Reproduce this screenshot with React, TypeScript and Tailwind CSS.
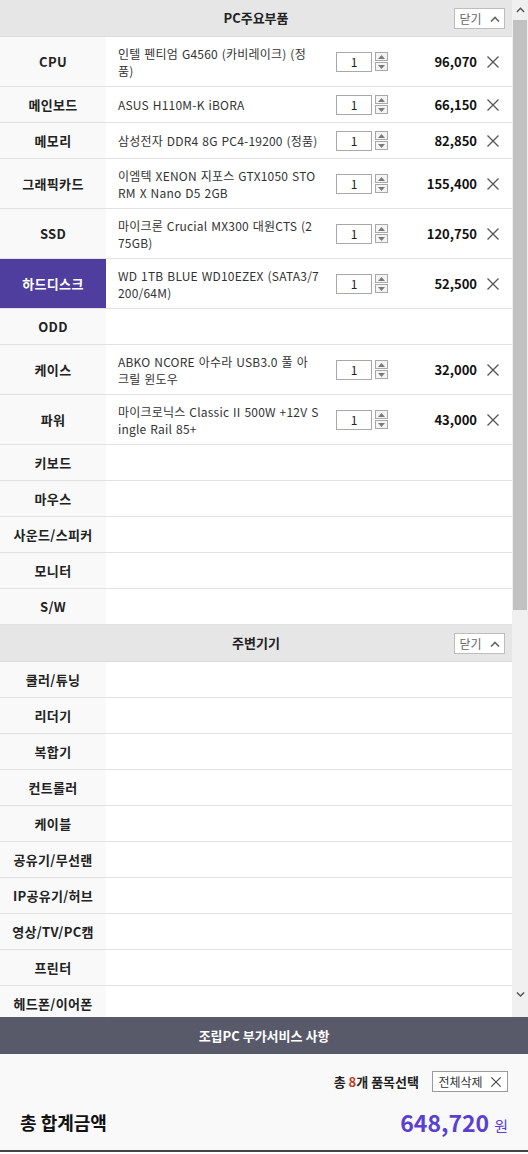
import React from "react"

type Part = { label: string; name?: string; price?: string; active?: boolean; tall?: boolean }

const MAIN_PARTS: Part[] = [
  { label: "CPU", name: "인텔 펜티엄 G4560 (카비레이크) (정\n품)", price: "96,070", tall: true },
  { label: "메인보드", name: "ASUS H110M-K iBORA", price: "66,150" },
  { label: "메모리", name: "삼성전자 DDR4 8G PC4-19200 (정품)", price: "82,850" },
  { label: "그래픽카드", name: "이엠텍 XENON 지포스 GTX1050 STO\nRM X Nano D5 2GB", price: "155,400", tall: true },
  { label: "SSD", name: "마이크론 Crucial MX300 대원CTS (2\n75GB)", price: "120,750", tall: true },
  { label: "하드디스크", name: "WD 1TB BLUE WD10EZEX (SATA3/7\n200/64M)", price: "52,500", tall: true, active: true },
  { label: "ODD" },
  { label: "케이스", name: "ABKO NCORE 아수라 USB3.0 풀 아\n크릴 윈도우", price: "32,000", tall: true },
  { label: "파워", name: "마이크로닉스 Classic II 500W +12V S\ningle Rail 85+", price: "43,000", tall: true },
  { label: "키보드" },
  { label: "마우스" },
  { label: "사운드/스피커" },
  { label: "모니터" },
  { label: "S/W" },
]

const EXTRA_PARTS: Part[] = [
  { label: "쿨러/튜닝" },
  { label: "리더기" },
  { label: "복합기" },
  { label: "컨트롤러" },
  { label: "케이블" },
  { label: "공유기/무선랜" },
  { label: "IP공유기/허브" },
  { label: "영상/TV/PC캠" },
  { label: "프린터" },
  { label: "헤드폰/이어폰" },
]

const FONT = { fontFamily: '"Noto Sans CJK KR", "Noto Sans", sans-serif' }

function CloseX({ size = 14, color = "#555" }: { size?: number; color?: string }) {
  return (
    <svg width={size} height={size} viewBox="0 0 14 14">
      <path d="M1.5 1.5L12.5 12.5M12.5 1.5L1.5 12.5" stroke={color} strokeWidth="1.3" fill="none" />
    </svg>
  )
}

function Caret({ up = true, color = "#666", size = 10 }: { up?: boolean; color?: string; size?: number }) {
  return (
    <svg width={size} height={size * 0.6} viewBox="0 0 10 6">
      <path d={up ? "M1 5.5L5 1.5L9 5.5" : "M1 0.5L5 4.5L9 0.5"} stroke={color} strokeWidth="1.6" fill="none" />
    </svg>
  )
}

function SectionHeader({ title }: { title: string }) {
  return (
    <div className="relative flex h-[37px] items-center justify-center bg-[#e6e6e6] border-b border-[#dcdcdc]">
      <span className="text-[13px] font-bold text-[#222]">{title}</span>
      <button className="absolute right-[7px] top-[8px] flex h-[21px] w-[51px] items-center justify-center gap-[8px] border border-[#bdbdbd] bg-white text-[12px] text-[#666]">
        닫기
        <Caret />
      </button>
    </div>
  )
}

function Spinner() {
  return (
    <div className="flex h-[19px] w-[13px] flex-col gap-[1px]">
      {[true, false].map((up) => (
        <div key={String(up)} className="flex flex-1 items-center justify-center border border-[#a8a8a8] bg-[#f4f4f4]">
          <svg width="7" height="4" viewBox="0 0 7 4">
            <path d={up ? "M0 4L3.5 0L7 4Z" : "M0 0L3.5 4L7 0Z"} fill="#7a7a7a" />
          </svg>
        </div>
      ))}
    </div>
  )
}

function PartRow({ part }: { part: Part }) {
  return (
    <div className={`grid grid-cols-[106px_1fr] border-b border-[#e2e2e2] ${part.tall ? "h-[50px]" : "h-[36px]"}`}>
      <div
        className={`flex items-center justify-center text-[13px] font-bold tracking-[0.3px] ${
          part.active ? "bg-[#4f3e9d] text-white" : "bg-[#f9f9f9] text-[#222]"
        }`}
      >
        {part.label}
      </div>
      <div className="flex items-center bg-white pl-[12px] pr-[12px]">
        {part.name && (
          <>
            <div className="w-[212px] whitespace-pre text-[12px] leading-[17px] tracking-[0.2px] [word-spacing:1px] text-[#333]">
              {part.name}
            </div>
            <div className="ml-[6px] flex h-[20px] w-[36px] items-center justify-center border border-[#a8a8a8] text-[12px] text-[#222]">
              1
            </div>
            <div className="ml-[3px]">
              <Spinner />
            </div>
            <div className="flex-1 text-right text-[13px] font-bold text-[#111]">{part.price}</div>
            <div className="ml-[9px]">
              <CloseX />
            </div>
          </>
        )}
      </div>
    </div>
  )
}

export default function App() {
  return (
    <div className="w-[528px] h-[1154px] bg-white overflow-hidden" style={FONT}>
      <div className="flex h-[1017px] overflow-hidden">
        <div className="w-[512px]">
          <SectionHeader title="PC주요부품" />
          {MAIN_PARTS.map((p) => (
            <PartRow key={p.label} part={p} />
          ))}
          <SectionHeader title="주변기기" />
          {EXTRA_PARTS.map((p) => (
            <PartRow key={p.label} part={p} />
          ))}
        </div>
        {/* fake scrollbar */}
        <div className="flex w-[16px] flex-col bg-[#f0f0f0]">
          <div className="flex h-[20px] items-center justify-center">
            <Caret color="#555" size={9} />
          </div>
          <div className="mx-[1px] h-[590px] bg-[#c1c1c1]" />
          <div className="flex-1" />
          <div className="flex h-[20px] items-center justify-center mb-[12px]">
            <Caret up={false} color="#555" size={9} />
          </div>
        </div>
      </div>

      <div className="flex h-[37px] items-center justify-center bg-[#585a6a] text-[13px] font-bold text-white">
        조립PC 부가서비스 사항
      </div>

      <div className="h-[98px] bg-[#f9f9f9] px-[20px] pt-[17px] border-b-2 border-[#444]">
        <div className="flex items-center justify-end gap-[13px]">
          <span className="text-[13px] font-bold text-[#222]">
            총 <span className="text-[#c0392b]">8</span>개 품목선택
          </span>
          <button className="flex h-[21px] w-[76px] items-center justify-center gap-[7px] border border-[#9a9a9a] bg-white text-[12px] text-[#333]">
            전체삭제
            <CloseX size={12} color="#444" />
          </button>
        </div>
        <div className="mt-[13px] flex items-center justify-between">
          <span className="text-[18px] font-bold text-[#111]">총 합계금액</span>
          <span className="flex items-baseline gap-[5px] text-[#5a40d2]">
            <span className="text-[23px] font-bold">648,720</span>
            <span className="text-[15px]">원</span>
          </span>
        </div>
      </div>
    </div>
  )
}
